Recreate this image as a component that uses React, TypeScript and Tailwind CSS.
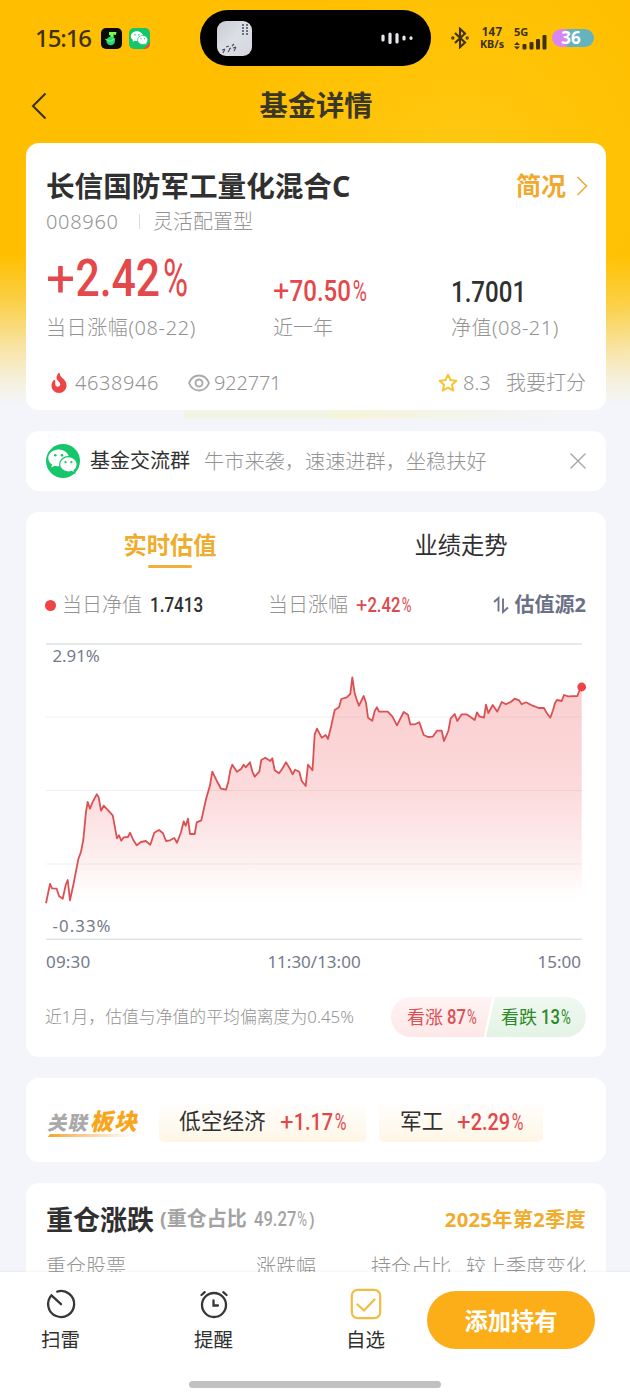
import React from "react";
import { FaFire } from "react-icons/fa";

const SANS = "font-['Noto_Sans','Noto_Sans_CJK_SC',sans-serif]";

const POINTS =
  "46,903.3 50,884 52,888.3 56.7,888.7 59,896 62.7,898.7 65.7,885 67.7,880 70,900.3 73.3,885 78.3,859.3 81,851.7 83.3,840 86,811.7 87.7,802 90,808.7 92.3,802.7 96.7,794.3 98.7,797.3 101,810.7 103.7,805.7 110,812.3 112.7,815.3 117,838.3 119,835.3 121.3,840.7 123.7,837.3 128,837 130,832.7 133.3,840 136.7,845.3 141,842 145.7,841 150.3,844.7 154.3,832.7 159,830 163,833.3 166,841 170,840.3 174.3,838 177,842.7 181,832.3 183.7,821.3 185.7,825.7 188,818.7 190,834 194.7,834 196.7,822.3 201.3,820.3 206,799.3 210,785.3 212.3,771.7 216.7,780.7 221,788.7 226,789.7 228.3,781.7 230.3,770.3 232.3,764.7 237,771.7 241,769 243.7,764.7 245.7,767.3 250,762.3 252.3,771.3 254.7,776.7 259.3,771.7 261.3,760 265.3,757.7 270.3,761 272.3,758.3 274.7,770.3 279,773.3 282.3,768.7 286,762.3 290,769 292.7,774.3 295,769.7 299.3,771.7 301.7,781 305.7,786 308,764.7 312.5,770.3 314.7,734.3 317,728.7 321.7,737.7 325.7,735 328,739 331.3,725.7 334.7,710 339,707.3 341.3,699 346.7,697.3 350.3,694 352.3,677.3 354.7,693.3 357,700.7 359,705.7 363.7,696 366,702.7 368,717.7 372.3,720.7 374.7,711 377,707.3 379,711.7 387.7,711.7 392.3,716.3 397,725.3 403.7,712 408,714.7 410.3,724.3 415,724.3 419.3,722.3 423.7,735 428,737 432.7,736.7 437,730.7 441.7,730.7 444,741 448.3,731 450.7,718.3 454.7,714 457.3,721 461.7,714.3 466.7,714.3 474.7,720 477,712.3 479.3,716.3 484,717.7 486,704.7 488.3,713 492.7,705 497.3,711.7 501.7,702 506,704.3 510.7,702 514.7,698.7 519,700.3 521.7,704.3 526,702.3 532.7,705.7 538.7,708 544,708 546.3,712.3 550.3,717.7 553,710.3 555,703 557,700 561.7,701 564,695 568.3,696.3 577.3,696 579.3,691 581.7,687";

/** Narrow figures: digits are condensed, the sign is wider and the percent sign narrower. */
function Num({ value, className }: { value: string; className: string }) {
  const plus = value.startsWith("+");
  const pct = value.endsWith("%");
  return (
    <span className={`inline-block shrink-0 whitespace-nowrap font-['Roboto',sans-serif] leading-none ${className}`}>
      <span className="inline-block origin-left scale-x-[0.83]">
        {plus && <span className="mr-[0.12em] inline-block origin-left scale-x-[1.2] font-normal">+</span>}
        {value.replace(/[+%]/g, "")}
        {pct && <span className="ml-[0.06em] inline-block origin-left scale-x-[0.8] font-normal">%</span>}
      </span>
    </span>
  );
}

function WeChat({ className }: { className: string }) {
  return (
    <svg viewBox="0 0 34 34" className={className}>
      <path d="M12.6 5.5C6.9 5.5 2.3 9.3 2.3 14c0 2.700 1.500 5 3.700 6.500L5.300 23.600l3.600-1.900c1.200.400 2.400.600 3.700.600C18.300 22.300 23 18.500 23 14S18.300 5.500 12.600 5.500Z" fill="#fff" />
      <path d="M22.600 12.700c-5 0-9 3.500-9 7.700s4 7.600 9 7.600c1.100 0 2.100-.200 3.100-.500l3 1.700-.700-2.700c2-1.400 3.200-3.600 3.200-6.100 0-4.200-3.900-7.700-8.600-7.700Z" fill="#fff" stroke="#15c66b" strokeWidth="1.200" />
      <g fill="#15c66b">
        <circle cx="9.300" cy="11.300" r="1.300" />
        <circle cx="16" cy="11.300" r="1.300" />
        <circle cx="19.600" cy="18.200" r="1.100" />
        <circle cx="25.400" cy="18.200" r="1.100" />
      </g>
    </svg>
  );
}

function StatusBar() {
  return (
    <div className="flex h-[76px] shrink-0 items-center pl-[35px] text-[#40310a]">
      <span className="w-[58px] whitespace-nowrap text-[24px] font-medium leading-none tracking-[-1.1px]">15:16</span>
      <div className="ml-[8px] flex h-[21px] w-[21px] items-center justify-center rounded-[5px] bg-[#080b08]">
        <svg viewBox="0 0 21 21" className="h-[21px] w-[21px]">
          <path d="M8 4h7.500l-.700 3-2.300-.600.300 4.500H9l.500-3.800-1.500.200Z" fill="#7dff45" />
          <circle cx="9.700" cy="13" r="4.300" fill="#1fd58a" />
          <path d="M4.500 11c2 1 3.500 3 5.500 2s3-3 4-2" stroke="#84f545" strokeWidth="1.300" fill="none" />
        </svg>
      </div>
      <div className="ml-[7px] h-[21px] w-[21px] overflow-hidden rounded-[5px] bg-[linear-gradient(135deg,#15c66b_84%,#e8503a_84%)]">
        <WeChat className="h-[20px] w-[21px]" />
      </div>
      <div className="ml-[50px] flex h-[56px] w-[231px] shrink-0 items-center justify-between rounded-full bg-black pl-[17px] pr-[18px]">
        <svg viewBox="0 0 35 35" className="h-[35px] w-[35px]">
          <defs>
            <linearGradient id="cover" x1="0" y1="0" x2="1" y2="1">
              <stop offset="0" stopColor="#c9ccd3" />
              <stop offset="0.500" stopColor="#dcdfe5" />
              <stop offset="1" stopColor="#d5d5de" />
            </linearGradient>
          </defs>
          <rect width="35" height="35" rx="9" fill="url(#cover)" />
          <path d="M26 3v11M30 3v11" stroke="#6a6f7b" strokeWidth="2" strokeDasharray="2 1" />
          <path d="M6 32l2-4M5 29l3-1M11 31l2-3M12 28l2-1M17 30l2-4M16 27l3-1M9 26l3-1M15 25l2-2" stroke="#4b4e58" strokeWidth="1.100" />
        </svg>
        <svg viewBox="0 0 32 12" className="h-[12px] w-[32px]">
          <g stroke="#e6e6ea" strokeWidth="3.200" strokeLinecap="round">
            <path d="M2 4v4M9 2v8.500M16 2.500v7.500M23 5v2M30 5.800v.5" />
          </g>
        </svg>
      </div>
      <svg viewBox="0 0 18 22" className="ml-[20px] h-[22px] w-[18px] shrink-0" fill="none" stroke="#40310a" strokeWidth="2.100">
        <path d="M4 6l10 9.500-5 4.700V1.800l5 4.700L4 16" />
        <circle cx="1.800" cy="11" r="0.600" />
        <circle cx="16.200" cy="11" r="0.600" />
      </svg>
      <div className="ml-[9px] flex w-[28px] flex-col items-center whitespace-nowrap text-[11.500px] font-bold leading-[12.500px]">
        <span className="tracking-[0.300px]">147</span>
        <span className="text-[10.800px]">KB/s</span>
      </div>
      <div className="ml-[8px] flex w-[34px] flex-col">
        <span className="text-[11px] font-bold leading-[10px]">5G</span>
        <svg viewBox="0 0 34 16" className="-mt-[3px] h-[16px] w-[34px]" fill="#40310a">
          <path d="M0 11l3-3 3 3ZM0 12.500l3 3 3-3Z" />
          <rect x="8.500" y="10" width="4" height="5.500" rx="1" />
          <rect x="15.500" y="8" width="4" height="7.500" rx="1" />
          <rect x="22" y="5" width="4" height="10.500" rx="1" />
          <rect x="28.500" y="1" width="4" height="14.500" rx="1" />
        </svg>
      </div>
      <div className="ml-[4px] flex h-[18px] w-[42px] items-center justify-center rounded-full bg-[linear-gradient(90deg,#da86f2_36%,#66b3c0_36%)] pb-[2px] pr-[4px] text-[17px] font-bold leading-none text-white">
        36
      </div>
    </div>
  );
}

function FundCard() {
  return (
    <section className="relative flex h-[267px] shrink-0 flex-col rounded-[13px] bg-white px-[20px] pt-px text-[20px] font-light text-[#939393]">
      <div className="absolute left-[158px] top-full h-[9px] w-[147px] bg-[#f2f4e6]" />
      <div className="absolute left-[305px] top-full h-[9px] w-[230px] bg-gradient-to-r from-[#f6f4d9] to-[#f3f5f8]" />
      <div className="flex h-[62px] items-end justify-between whitespace-nowrap">
        <h2 className="flex h-[40px] items-center text-[28.600px] font-bold text-[#303030]">长信国防军工量化混合C</h2>
        <div className="flex h-[40px] items-center text-[25px] font-bold text-[#f0a92c]">
          简况
          <svg viewBox="0 0 12 20" className="-mr-[2px] ml-[10px] h-[20px] w-[12px]" fill="none" stroke="#f0a92c" strokeWidth="1.500">
            <path d="M1.500 1l9 9-9 9" />
          </svg>
        </div>
      </div>
      <div className="flex h-[31px] items-center whitespace-nowrap leading-none">
        <span className="w-[93px] tracking-[0.700px]">008960</span>
        <span className="mr-[13px] h-[15px] w-px bg-[#dcdcdc]" />
        灵活配置型
      </div>
      <div className="flex h-[69px] items-end font-medium text-[#e5484b]">
        <Num value="+2.42%" className="mb-[2px] w-[227px] text-[51.500px]" />
        <Num value="+70.50%" className="w-[178px] text-[29px]" />
        <Num value="1.7001" className="-mb-px text-[29px] text-[#303030]" />
      </div>
      <div className="flex h-[43px] items-center whitespace-nowrap leading-none">
        <span className="w-[227px] tracking-[0.600px]">当日涨幅(08-22)</span>
        <span className="w-[178px]">近一年</span>
        <span className="tracking-[0.500px]">净值(08-21)</span>
      </div>
      <div className="mt-[14px] flex h-[40px] items-center whitespace-nowrap leading-none">
        <FaFire className="ml-[4px] mr-[7px] h-[20px] w-[18px] text-[#ee4444]" />
        <span className="w-[113px] tracking-[0.600px]">4638946</span>
        <svg viewBox="0 0 22 18" className="mr-[4px] h-[18px] w-[22px]" fill="none" stroke="#aaaaaa" strokeWidth="1.900">
          <path d="M1 9C3 4 6.500 1.500 11 1.500S19 4 21 9c-2 5-5.500 7.500-10 7.500S3 14 1 9Z" />
          <circle cx="11" cy="9" r="3.500" />
        </svg>
        <span className="tracking-[-0.200px]">922771</span>
        <svg viewBox="0 0 20 20" className="ml-auto mr-[5px] h-[20px] w-[20px]" fill="none" stroke="#f7c52e" strokeWidth="2" strokeLinejoin="round">
          <path d="M10 1.800l2.500 5.300 5.800.700-4.300 4 1.200 5.800L10 14.700l-5.200 2.900L6 11.800l-4.300-4 5.800-.7Z" />
        </svg>
        <span className="w-[43px]">8.3</span>
        <span>我要打分</span>
      </div>
    </section>
  );
}

function Chart() {
  return (
    <svg viewBox="45 636 542 310" className="h-[310px] w-[542px] shrink-0">
      <defs>
        <linearGradient id="area" gradientUnits="userSpaceOnUse" x1="0" y1="677" x2="0" y2="905">
          <stop offset="0" stopColor="#f26d70" stopOpacity="0.340" />
          <stop offset="0.500" stopColor="#f26d70" stopOpacity="0.250" />
          <stop offset="0.780" stopColor="#f26d70" stopOpacity="0.120" />
          <stop offset="0.950" stopColor="#f26d70" stopOpacity="0.010" />
          <stop offset="1" stopColor="#f26d70" stopOpacity="0" />
        </linearGradient>
      </defs>
      <g strokeWidth="1.200">
        <path d="M46 644H582M46 939.200H582" stroke="#dfe4e5" strokeWidth="1.500" />
        <path d="M46 717H582M46 790.500H582M46 864H582" stroke="#eef1f1" />
      </g>
      <polygon points={`${POINTS} 581.700,905 46,905`} fill="url(#area)" />
      <polyline points={POINTS} fill="none" stroke="#dc5053" strokeWidth="1.800" strokeLinejoin="round" />
      <circle cx="581.700" cy="687" r="4.400" fill="#ee4347" />
      <g fill="#747a8a" fontSize="16.800" fontFamily="Noto Sans">
        <text x="52.500" y="662">2.91%</text>
        <text x="52.500" y="932" textLength="58">-0.33%</text>
      </g>
    </svg>
  );
}

function ValuationCard() {
  return (
    <section className="flex h-[545px] shrink-0 flex-col rounded-[13px] bg-white">
      <div className="flex h-[66px] text-[23.300px] leading-none text-[#303030]">
        <div className="flex w-1/2 flex-col items-center pr-[2px] pt-[21px] font-bold text-[#f0ac2c]">
          <span className="h-[32px] leading-[24px]">实时估值</span>
          <span className="h-[3px] w-[44px] rounded-full bg-[#f0b03a]" />
        </div>
        <div className="flex w-1/2 justify-center pt-[21px]">
          <span className="leading-[24px]">业绩走势</span>
        </div>
      </div>
      <div className="flex h-[54px] items-center whitespace-nowrap px-[20px] text-[20px] font-light leading-none text-[#939393]">
        <span className="-ml-px mr-[6px] h-[11px] w-[11px] rounded-full bg-[#ee4347]" />
        <span className="w-[88px]">当日净值</span>
        <Num value="1.7413" className="w-[118px] text-[20.500px] font-medium text-[#303030]" />
        <span className="w-[88px]">当日涨幅</span>
        <Num value="+2.42%" className="text-[20px] font-medium text-[#e0484b]" />
        <svg viewBox="0 0 16 18" className="ml-auto mr-[6px] h-[18px] w-[16px]" fill="none" stroke="#6f7589" strokeWidth="1.900">
          <path d="M1 6l4.500-4V15.500M10 2.500v13.500l5-4.500" />
        </svg>
        <span className="font-bold text-[#6a7086]">估值源2</span>
      </div>
      <div className="mt-[4px] flex h-[310px] pl-[19px]">
        <Chart />
      </div>
      <div className="flex h-[30px] items-center justify-between pl-[20px] pr-[25px] text-[17px] leading-none text-[#747a8a]">
        <span className="tracking-[0.200px]">09:30</span>
        <span>11:30/13:00</span>
        <span>15:00</span>
      </div>
      <div className="mt-[21px] flex h-[40px] items-center justify-between whitespace-nowrap px-[20px] leading-none">
        <span className="-ml-px text-[16.850px] font-light text-[#939393]">近1月，估值与净值的平均偏离度为0.45%</span>
        <div className="flex h-[40px] w-[195px] text-[18px]">
          <div className="flex h-[40px] w-[101px] items-center rounded-l-full bg-[linear-gradient(#fff3f3,#fde8e9)] pl-[16px] text-[#dc4f52] [clip-path:polygon(0_0,100%_0,92%_100%,0_100%)]">
            <span className="w-[40px]">看涨</span>
            <Num value="87%" className="text-[20px] font-medium" />
          </div>
          <div className="-ml-[6px] flex h-[40px] w-[100px] items-center rounded-r-full bg-[linear-gradient(#f0f8f1,#e4f3e6)] pl-[15px] text-[#2d8a28] [clip-path:polygon(9%_0,100%_0,100%_100%,0_100%)]">
            <span className="w-[40px]">看跌</span>
            <Num value="13%" className="text-[20px] font-medium" />
          </div>
        </div>
      </div>
    </section>
  );
}

function Sectors() {
  return (
    <section className="flex h-[84px] shrink-0 items-center rounded-[13px] bg-white pl-[20px] pt-[2px]">
      <div className="flex w-[113px] flex-col pl-[3px] pt-[3px]">
        <div className="flex h-[25px] -skew-x-12 items-end whitespace-nowrap font-black leading-none">
          <span className="text-[19.500px] leading-[20px] tracking-[1px] text-[#a9a9a9]">关联</span>
          <span className="ml-[2px] text-[23px] leading-[24px] tracking-[1px] text-[#f9a51c]">板块</span>
        </div>
        <div className="mt-px h-[3px] w-[86px] -skew-x-[40deg] bg-gradient-to-r from-[#f7a51f] to-white" />
      </div>
      <div className="flex h-[42px] w-[207px] items-center rounded-[5px] bg-gradient-to-b from-white to-[#fef6e6] pl-[20px] text-[21.700px] leading-none text-[#303030]">
        <span className="w-[101px] whitespace-nowrap">低空经济</span>
        <Num value="+1.17%" className="mt-[2px] text-[24px] font-medium text-[#e0484b]" />
      </div>
      <div className="ml-[13px] flex h-[42px] w-[164px] items-center rounded-[5px] bg-gradient-to-b from-white to-[#fef6e6] pl-[21px] text-[21.700px] leading-none text-[#303030]">
        <span className="w-[57px] whitespace-nowrap">军工</span>
        <Num value="+2.29%" className="mt-[2px] text-[24px] font-medium text-[#e0484b]" />
      </div>
    </section>
  );
}

function Holdings() {
  return (
    <section className="flex h-[200px] shrink-0 flex-col rounded-[13px] bg-white px-[20px] pt-[19px]">
      <div className="flex h-[34px] items-center whitespace-nowrap font-bold leading-none">
        <span className="w-[114px] text-[27px] text-[#303030]">重仓涨跌</span>
        <span className="text-[20px] text-[#a3a3a3]">(重仓占比</span>
        <Num value="49.27%" className="ml-[7px] w-[55px] text-[20px] font-medium text-[#a3a3a3]" />
        <span className="text-[19px] font-normal text-[#a3a3a3]">)</span>
        <span className="ml-auto text-[20.200px] tracking-[0.300px] text-[#f0ac2c]">2025年第2季度</span>
      </div>
      <div className="mt-[14px] flex h-[34px] items-center whitespace-nowrap text-[20px] font-light leading-none text-[#939393]">
        <span className="w-[210px]">重仓股票</span>
        <span>涨跌幅</span>
        <span className="ml-auto mr-[15px]">持仓占比</span>
        <span>较上季度变化</span>
      </div>
    </section>
  );
}

function BottomBar() {
  const stroke = { fill: "none", stroke: "#373737", strokeWidth: 2.3, strokeLinecap: "round" as const };
  return (
    <footer className="relative flex h-[128px] shrink-0 flex-col bg-white shadow-[0_-1px_2px_rgba(0,0,0,0.05)]">
      <div className="flex h-[96px] text-[19.500px] leading-none text-[#303030]">
        <div className="ml-[30px] flex w-[61px] flex-col items-center pt-[16px]">
          <svg viewBox="0 0 32 32" className="h-[32px] w-[32px]" {...stroke}>
            <path d="M12.300 3.600A13 13 0 1 1 6.500 7.300L16 16.200" />
          </svg>
          <span className="mt-[10px]">扫雷</span>
        </div>
        <div className="ml-[92px] flex w-[61px] flex-col items-center pt-[16px]">
          <svg viewBox="0 0 32 32" className="h-[32px] w-[32px]" {...stroke}>
            <circle cx="16" cy="17" r="12" />
            <path d="M15.500 12.500v5h4.500M3.500 7l3.200-2.800M28.500 7l-3.200-2.800" />
          </svg>
          <span className="mt-[10px]">提醒</span>
        </div>
        <div className="ml-[91px] flex w-[61px] flex-col items-center pt-[16px]">
          <svg viewBox="0 0 32 32" className="h-[32px] w-[32px]" fill="none" stroke="#f0bd43" strokeWidth="2.200" strokeLinecap="round">
            <rect x="1.800" y="1.800" width="28.400" height="28.400" rx="6" />
            <path d="M7.500 16.500l6.500 6 10.500-11" />
          </svg>
          <span className="mt-[10px]">自选</span>
        </div>
        <button className="ml-[31px] mt-[19px] flex h-[58px] w-[168px] items-center justify-center rounded-full bg-[#fcae18] pt-[3px] text-[23.300px] font-bold text-white">
          添加持有
        </button>
      </div>
      <div className="mx-auto mt-[13px] h-[7px] w-[252px] rounded-full bg-[#c1c1c1]" />
    </footer>
  );
}

export default function App() {
  return (
    <div className={`flex h-[1400px] w-[630px] flex-col overflow-hidden bg-[#f3f5fb] ${SANS}`}>
      <div className="flex min-h-0 flex-1 flex-col overflow-hidden bg-[radial-gradient(circle_at_460px_180px,rgba(255,210,40,0.5)_0,rgba(255,205,20,0.25)_150px,transparent_240px),linear-gradient(#ffbf00_0,#ffbf00_255px,#fbcf45_300px,#f8e3a0_345px,#f5f0dc_380px,#f3f5fb_405px)] bg-[length:100%_420px] bg-no-repeat">
        <StatusBar />
        <header className="flex h-[67px] shrink-0 items-center px-[31px] pb-[8px]">
          <svg viewBox="0 0 16 28" className="h-[28px] w-[16px]" fill="none" stroke="#3b3324" strokeWidth="2.100">
            <path d="M14.500 1.500L2 14l12.500 12.500" />
          </svg>
          <h1 className="flex-1 pr-[14px] text-center text-[28.300px] font-bold leading-none text-[#3b3726]">基金详情</h1>
        </header>
        <main className="flex flex-col gap-[21px] pl-[26px] pr-[24px]">
          <FundCard />
          <section className="flex h-[60px] shrink-0 items-center whitespace-nowrap rounded-[13px] bg-white pl-[20px] pr-[20px] leading-none">
            <div className="h-[34px] w-[34px] rounded-full bg-[#15c66b]">
              <WeChat className="h-[34px] w-[34px]" />
            </div>
            <span className="ml-[10px] w-[114px] text-[20px] text-[#303030]">基金交流群</span>
            <span className="text-[20.200px] font-light text-[#939393]">牛市来袭，速速进群，坐稳扶好</span>
            <svg viewBox="0 0 16 16" className="ml-auto h-[16px] w-[16px]" stroke="#a6a6a6" strokeWidth="1.400">
              <path d="M.5.500l15 15M15.500.500l-15 15" />
            </svg>
          </section>
          <ValuationCard />
          <Sectors />
          <Holdings />
        </main>
      </div>
      <BottomBar />
    </div>
  );
}
